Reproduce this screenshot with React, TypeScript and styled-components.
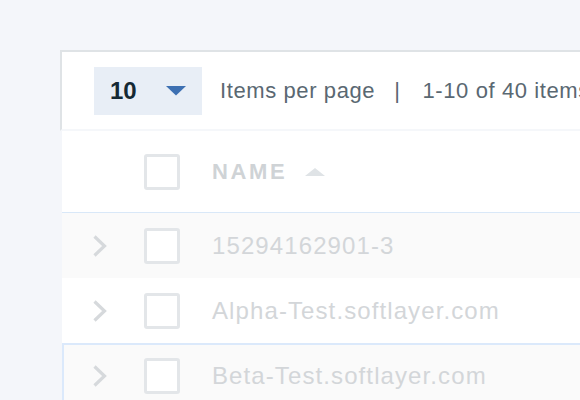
import { FC } from "react";
import styled, { createGlobalStyle } from "styled-components";

const GlobalStyle = createGlobalStyle`
  html, body {
    margin: 0;
    padding: 0;
    background: #f4f6fa;
    font-family: "Liberation Sans", Arial, sans-serif;
  }
`;

const Page = styled.div`
  width: 580px;
  height: 400px;
  overflow: hidden;
  box-sizing: border-box;
  padding: 50px 0 0 60px;
  background: #f4f6fa;
`;

const Panel = styled.div`
  width: 720px;
`;

const Toolbar = styled.div`
  display: flex;
  align-items: center;
  height: 77px;
  padding-left: 32px;
  background: #ffffff;
  border-top: 2px solid #dfe3e6;
  border-left: 2px solid #dfe3e6;
  border-bottom: 2px solid #f5f7fa;
`;

const PageSizeSelect = styled.div`
  display: flex;
  align-items: center;
  justify-content: space-between;
  box-sizing: border-box;
  width: 108px;
  height: 48px;
  padding: 0 16px;
  background: #e8eef6;
  font-size: 24px;
  font-weight: 700;
  color: #152934;
`;

const ToolbarText = styled.span`
  font-size: 22px;
  letter-spacing: 0.6px;
  color: #5a6872;
  white-space: nowrap;
`;

const Divider = styled(ToolbarText)`
  margin: 0 22px 0 19px;
`;

const ItemsLabel = styled(ToolbarText)`
  margin-left: 18px;
`;

const Table = styled.div`
  margin-left: 2px;
  background: #ffffff;
`;

const Row = styled.div<{ $header?: boolean; $shade?: boolean; $selected?: boolean }>`
  display: grid;
  grid-template-columns: 82px 68px 1fr;
  align-items: center;
  height: ${(p) => (p.$header ? "81px" : "65px")};
  background: ${(p) => (p.$shade ? "#fafafa" : "#ffffff")};
  border-bottom: ${(p) => (p.$header ? "1px solid #d9e8f8" : "none")};
  box-shadow: ${(p) => (p.$selected ? "inset 2px 2px 0 #dbe9fb" : "none")};
`;

const ExpandCell = styled.div`
  display: flex;
  align-items: center;
  padding-left: 30px;
`;

const Checkbox = styled.div`
  box-sizing: border-box;
  width: 36px;
  height: 36px;
  border: 3px solid #e3e6e9;
  border-radius: 3px;
  background: #ffffff;
`;

const HeaderLabel = styled.div`
  display: flex;
  align-items: center;
  gap: 18px;
  font-size: 22px;
  font-weight: 700;
  letter-spacing: 2.6px;
  color: #cfd3d6;
`;

const NameCell = styled.div`
  font-size: 24px;
  letter-spacing: 1.1px;
  color: #d3d6d9;
  white-space: nowrap;
`;

const Chevron: FC = () => (
  <svg width="16" height="24" viewBox="0 0 16 24">
    <polyline
      points="2.5,2.5 12.5,12 2.5,21.5"
      fill="none"
      stroke="#d6d9dc"
      strokeWidth="3.2"
    />
  </svg>
);

const rows = [
  { name: "15294162901-3", shade: true, selected: false },
  { name: "Alpha-Test.softlayer.com", shade: false, selected: false },
  { name: "Beta-Test.softlayer.com", shade: true, selected: true },
];

const App: FC = () => (
  <Page>
    <GlobalStyle />
    <Panel>
      <Toolbar>
        <PageSizeSelect>
          10
          <svg width="20" height="10" viewBox="0 0 20 10">
            <polygon points="0,0 20,0 10,9.5" fill="#3d70b2" />
          </svg>
        </PageSizeSelect>
        <ItemsLabel>Items per page</ItemsLabel>
        <Divider>|</Divider>
        <ToolbarText>1-10 of 40 items</ToolbarText>
      </Toolbar>
      <Table>
        <Row $header>
          <span />
          <Checkbox />
          <HeaderLabel>
            NAME
            <svg width="20" height="8" viewBox="0 0 20 8">
              <polygon points="10,0 20,8 0,8" fill="#dfe3e6" />
            </svg>
          </HeaderLabel>
        </Row>
        {rows.map((r) => (
          <Row key={r.name} $shade={r.shade} $selected={r.selected}>
            <ExpandCell>
              <Chevron />
            </ExpandCell>
            <Checkbox />
            <NameCell>{r.name}</NameCell>
          </Row>
        ))}
      </Table>
    </Panel>
  </Page>
);

export default App;
